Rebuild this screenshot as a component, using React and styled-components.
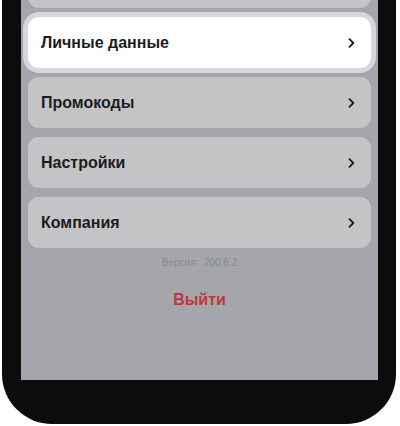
import styled, { createGlobalStyle } from "styled-components";

const GlobalStyle = createGlobalStyle`
  html, body {
    margin: 0;
    padding: 0;
    background: #ffffff;
    overflow: hidden;
  }
  body {
    font-family: "Liberation Sans", Arial, sans-serif;
  }
`;

const PhoneFrame = styled.div`
  width: 357px;
  margin-left: 2px;
  padding: 0 18px 44px 19px;
  background: #0c0c0c;
  border-radius: 0 0 50px 50px;
`;

const Screen = styled.div`
  height: 380px;
  background: #a4a6ab;
  overflow: hidden;
  display: flex;
  flex-direction: column;
  align-items: center;
`;

const MenuList = styled.ul`
  list-style: none;
  margin: -43px 0 0;
  padding: 0 7px;
  width: 100%;
  box-sizing: border-box;
  display: flex;
  flex-direction: column;
  gap: 9px;
`;

const MenuItem = styled.li`
  height: 51px;
  box-sizing: border-box;
  display: flex;
  align-items: center;
  justify-content: space-between;
  padding: 0 16px 0 13px;
  border-radius: 11px;
  background: ${({ $active }) => ($active ? "#ffffff" : "#c4c4c6")};
  box-shadow: ${({ $active }) => ($active ? "0 0 0 5px #d3d7df" : "none")};
`;

const ItemTitle = styled.span`
  font-size: 16px;
  font-weight: 700;
  color: #1c1c1e;
`;

const Chevron = styled.svg`
  width: 7px;
  height: 10px;
  color: #1c1c1e;
`;

const Version = styled.div`
  margin-top: 8px;
  font-size: 10px;
  line-height: 14px;
  color: #878a92;
  white-space: pre;
`;

const LogoutButton = styled.button`
  margin-top: 20px;
  border: 0;
  background: none;
  padding: 0;
  font-family: "Liberation Sans", Arial, sans-serif;
  font-size: 16px;
  line-height: 20px;
  font-weight: 700;
  color: #bd383c;
`;

const items = [
  { title: "", hidden: true },
  { title: "Личные данные", active: true },
  { title: "Промокоды" },
  { title: "Настройки" },
  { title: "Компания" },
];

function ChevronIcon() {
  return (
    <Chevron viewBox="0 0 7 10" fill="none">
      <path
        d="M1.5 1.2L5.3 5L1.5 8.8"
        stroke="currentColor"
        strokeWidth="1.8"
        strokeLinecap="round"
        strokeLinejoin="round"
      />
    </Chevron>
  );
}

export default function App() {
  return (
    <>
      <GlobalStyle />
      <PhoneFrame>
        <Screen>
          <MenuList>
            {items.map((item, i) => (
              <MenuItem key={i} $active={item.active}>
                <ItemTitle>{item.title}</ItemTitle>
                {!item.hidden && <ChevronIcon />}
              </MenuItem>
            ))}
          </MenuList>
          <Version>{"Версия:  200.6.2"}</Version>
          <LogoutButton>Выйти</LogoutButton>
        </Screen>
      </PhoneFrame>
    </>
  );
}
